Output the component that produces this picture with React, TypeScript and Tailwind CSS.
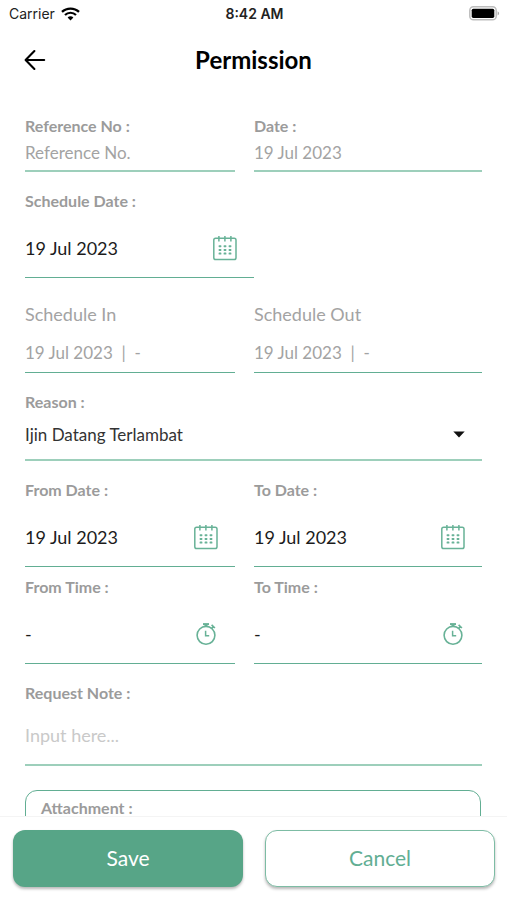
import clsx from "clsx";
import type { ReactNode } from "react";

function WifiIcon() {
  return (
    <svg width="19" height="14" viewBox="0 0 19 14" fill="none" stroke="#000">
      <path d="M1 4.9C5.6 0.4 13.4 0.4 18 4.9" strokeWidth="2.3" />
      <path d="M4 8C7 5 12 5 15 8" strokeWidth="2.2" />
      <path d="M9.5 13.4L6.6 10.4C8.2 8.9 10.8 8.9 12.4 10.4Z" fill="#000" stroke="none" />
    </svg>
  );
}

function BatteryIcon() {
  return (
    <svg width="31" height="15" viewBox="0 0 31 15" fill="none">
      <rect x="0.8" y="0.8" width="26.4" height="13" rx="3.6" fill="#fff" stroke="#bdbdbd" strokeWidth="1.5" />
      <rect x="2.7" y="2.7" width="22.6" height="9.2" rx="1.6" fill="#000" />
      <path d="M28.6 5.2C30.6 6 30.6 8.6 28.6 9.4Z" fill="#a8a8a8" />
    </svg>
  );
}

function BackIcon() {
  return (
    <svg
      width="22"
      height="22"
      viewBox="0 0 22 22"
      fill="none"
      stroke="#000"
      strokeWidth="2.1"
      strokeLinecap="round"
      strokeLinejoin="round"
    >
      <path d="M20.2 11H1.8M10.4 2L1.6 11L10.4 20" />
    </svg>
  );
}

const dots = [9, 12.7, 16.4];

function CalendarIcon() {
  return (
    <svg width="26" height="26" viewBox="0 0 26 26" fill="none" stroke="#68b297">
      <rect x="1.8" y="3.2" width="22.2" height="21.3" rx="1.8" strokeWidth="1.5" />
      <path d="M6.9 1v5.4M12.9 1v5.4M18.9 1v5.4" strokeWidth="1.5" />
      {[8, 13, 18].map((x) =>
        dots.map((y) => (
          <rect key={`${x}-${y}`} x={x - 1.4} y={y + 1.2} width="2.8" height="2" rx="0.6" fill="#68b297" stroke="none" />
        )),
      )}
    </svg>
  );
}

function StopwatchIcon() {
  return (
    <svg width="26" height="26" viewBox="0 0 26 26" fill="none" stroke="#68b297">
      <circle cx="13" cy="14.3" r="8.9" strokeWidth="1.6" />
      <path d="M10 3.1h6" strokeWidth="2" />
      <path d="M13 3.5v2" strokeWidth="3" />
      <path d="M18.4 7.6L20.4 5.6M18.6 3.9L21.9 7" strokeWidth="1.7" />
      <path d="M12.6 9.8V14.8H16.2" strokeWidth="1.5" />
    </svg>
  );
}

type FieldProps = {
  label: string;
  children: ReactNode;
  className?: string;
  labelClassName?: string;
  valueClassName?: string;
};

function Field({ label, children, className, labelClassName, valueClassName }: FieldProps) {
  return (
    <div className={clsx("flex flex-col", className)}>
      <span className={clsx("leading-5", labelClassName ?? "text-[16px] font-bold text-[#9b9b9b]")}>{label}</span>
      <div className={clsx("flex flex-1 items-center justify-between", valueClassName)}>{children}</div>
    </div>
  );
}

const muted = "text-[17px] text-[#a3a3a3]";
const dark = "text-[18px] text-[#1c1c1c]";
const thin = "border-b border-[#62ae93]";
const thick = "border-b-2 border-[#9dcfbb]";
const columns = "grid grid-cols-[210px_228px] gap-x-[19px]";

export default function App() {
  return (
    <div className="flex h-[900px] w-[507px] flex-col overflow-hidden bg-white font-['Lato',sans-serif]">
      <div className="grid h-[27px] shrink-0 grid-cols-3 items-center pr-[7px] pl-[9px] font-['Inter',sans-serif] text-[14px] text-[#222]">
        <div className="flex items-center gap-[6px]">
          <span>Carrier</span>
          <WifiIcon />
        </div>
        <span className="text-center font-semibold">8:42 AM</span>
        <div className="flex justify-end">
          <BatteryIcon />
        </div>
      </div>

      <header className="grid h-[65px] shrink-0 grid-cols-[1fr_auto_1fr] items-center px-6">
        <BackIcon />
        <h1 className="text-[24px] font-bold text-black">Permission</h1>
      </header>

      <main className="flex-1 overflow-hidden pt-6 pl-[25px]">
        <div className={columns}>
          <Field label="Reference No :" className={clsx("h-14", thick)}>
            <span className={muted}>Reference No.</span>
          </Field>
          <Field label="Date :" className={clsx("h-14", thick)}>
            <span className={muted}>19 Jul 2023</span>
          </Field>
        </div>

        <Field label="Schedule Date :" className={clsx("mt-[19px] h-[87px] w-[229px] pt-0", thin)} valueClassName="mt-2 pr-4">
          <span className={dark}>19 Jul 2023</span>
          <CalendarIcon />
        </Field>

        <div className={clsx("mt-[26px]", columns)}>
          <Field label="Schedule In" labelClassName="text-[18px] text-[#a3a3a3]" className={clsx("h-[69px]", thin)} valueClassName="mt-[10px]">
            <span className={clsx("whitespace-pre", muted)}>{"19 Jul 2023  |  -"}</span>
          </Field>
          <Field label="Schedule Out" labelClassName="text-[18px] text-[#a3a3a3]" className={clsx("h-[69px]", thin)} valueClassName="mt-[10px]">
            <span className={clsx("whitespace-pre", muted)}>{"19 Jul 2023  |  -"}</span>
          </Field>
        </div>

        <Field label="Reason :" className={clsx("mt-[19px] h-[69px] w-[457px]", thick)} valueClassName="pr-[17px] pb-0.5">
          <span className="text-[17px] text-[#333]">Ijin Datang Terlambat</span>
          <svg width="12" height="7" viewBox="0 0 12 7">
            <path d="M0.3 0.5H11.7L6 6.5Z" fill="#111" />
          </svg>
        </Field>

        <div className={clsx("mt-[19px]", columns)}>
          <Field label="From Date :" className={clsx("h-[87px]", thin)} valueClassName="mt-2 pr-4">
            <span className={dark}>19 Jul 2023</span>
            <CalendarIcon />
          </Field>
          <Field label="To Date :" className={clsx("h-[87px]", thin)} valueClassName="mt-2 pr-4">
            <span className={dark}>19 Jul 2023</span>
            <CalendarIcon />
          </Field>
        </div>

        <div className={clsx("mt-[10px]", columns)}>
          <Field label="From Time :" className={clsx("h-[87px]", thin)} valueClassName="mt-2 pr-4">
            <span className={dark}>-</span>
            <StopwatchIcon />
          </Field>
          <Field label="To Time :" className={clsx("h-[87px]", thin)} valueClassName="mt-2 pr-4">
            <span className={dark}>-</span>
            <StopwatchIcon />
          </Field>
        </div>

        <Field label="Request Note :" className={clsx("mt-[19px] h-[83px] w-[457px]", thick)} valueClassName="mt-[3px]">
          <span className="text-[18px] text-[#c9c9c9]">Input here...</span>
        </Field>

        <div className="mt-6 h-24 w-[456px] rounded-[12px] border border-[#62ae93] px-[15px] pt-[7px]">
          <span className="block text-[16px] leading-5 font-bold text-[#9b9b9b]">Attachment :</span>
        </div>
      </main>

      <footer className="grid h-[84px] shrink-0 grid-cols-[230px_230px] gap-x-[22px] border-t border-[#f4f4f4] pt-[13px] pl-[13px]">
        <button className="h-[57px] rounded-[12px] bg-[#57a587] pb-0.5 text-[21px] text-white shadow-[0_2px_3px_rgba(0,0,0,0.28)]">
          Save
        </button>
        <button className="h-[57px] rounded-[12px] border-[1.5px] border-[#7dbca4] bg-white pb-0.5 text-[21px] text-[#62ae93] shadow-[0_2px_3px_rgba(0,0,0,0.28)]">
          Cancel
        </button>
      </footer>
    </div>
  );
}
